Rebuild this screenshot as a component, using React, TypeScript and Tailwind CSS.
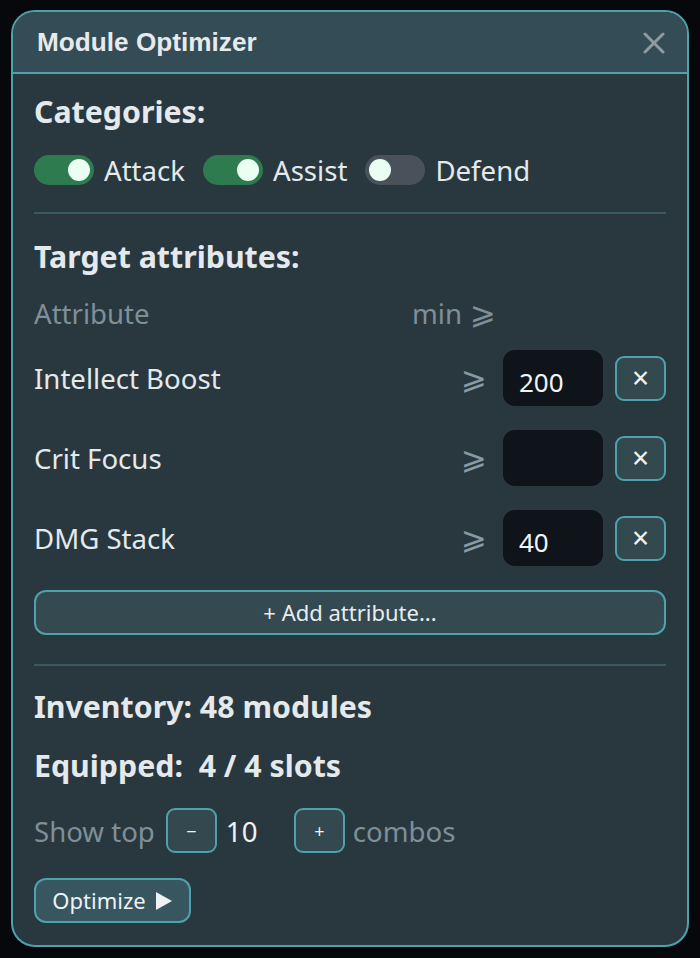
import React from "react";

type Attr = { name: string; value: string };

const attrs: Attr[] = [
	{ name: "Intellect Boost", value: "200" },
	{ name: "Crit Focus", value: "" },
	{ name: "DMG Stack", value: "40" },
];

const Toggle = ({ on, label }: { on: boolean; label: string }) => (
	<div className="flex items-center gap-[10px]">
		<div
			className={
				on
					? "flex h-[30px] w-[60px] items-center justify-end rounded-full bg-[#2e7b4f] px-[4px]"
					: "flex h-[30px] w-[60px] items-center justify-start rounded-full bg-[#49525b] px-[4px]"
			}
		>
			<div className="h-[22px] w-[22px] rounded-full bg-[#eafff2]" />
		</div>
		<span className="leading-[34px]">{label}</span>
	</div>
);

const SmallButton = ({ children }: { children: React.ReactNode }) => (
	<button className="flex h-[45px] w-[51px] items-center justify-center rounded-[9px] border-2 border-[#4ca3ad] bg-[#344850] leading-none text-[#eef2f4]">
		{children}
	</button>
);

export default function App() {
	return (
		<div className="min-h-[958px] w-full bg-[#07080b] px-[11px] pt-[10px] font-['Noto_Sans',sans-serif]">
			<div className="h-[937px] w-[678px] overflow-hidden rounded-[24px] border-2 border-[#4ca3ad] bg-[#29383f]">
				{/* header */}
				<div className="flex h-[62px] items-center justify-between border-b-2 border-[#4ca3ad] bg-[#334c55] pl-[24px] pr-[22px]">
					<h1 className="pt-[2px] font-['Liberation_Sans',Arial,sans-serif] text-[26.2px] font-bold text-[#e6eaec]">
						Module Optimizer
					</h1>
					<svg width="22" height="22" viewBox="0 0 22 22" className="mt-[1px]">
						<path d="M2 2 L20 20 M20 2 L2 20" stroke="#8f9b9f" strokeWidth="3" strokeLinecap="round" />
					</svg>
				</div>

				{/* body */}
				<div className="flex flex-col px-[21px] pt-[21px] text-[27.6px] text-[#e4e9ec]">
					<h2 className="text-[30.3px] font-bold leading-[34px]">Categories:</h2>

					<div className="mt-[26px] flex h-[30px] items-center gap-[18px]">
						<Toggle on label="Attack" />
						<Toggle on label="Assist" />
						<Toggle on={false} label="Defend" />
					</div>

					<div className="mt-[27px] h-[2px] bg-[#395861]" />

					<h2 className="mt-[26px] text-[30.3px] font-bold leading-[34px]">Target attributes:</h2>

					<div className="mt-[22px] flex items-center leading-[34px] text-[#7e8f98]">
						<span className="flex-1">Attribute</span>
						<span className="flex w-[254px] items-center gap-[8px]">
							min <span className="font-['DejaVu_Sans',sans-serif] text-[31px] leading-none">⩾</span>
						</span>
					</div>

					<div className="mt-[20px] flex flex-col gap-[24px]">
						{attrs.map((a) => (
							<div key={a.name} className="flex h-[56px] items-center">
								<span className="flex-1 leading-[34px]">{a.name}</span>
								<span className="font-['DejaVu_Sans',sans-serif] text-[31px] leading-none text-[#8a9aa3]">⩾</span>
								<div className="ml-[16px] flex h-[56px] w-[100px] items-end rounded-[12px] bg-[#0e141a] pb-[9px] pl-[16px] text-[26px] leading-[30px] text-[#f1f4f6]">
									{a.value}
								</div>
								<div className="ml-[12px]">
									<SmallButton>
										<span className="text-[30px]">×</span>
									</SmallButton>
								</div>
							</div>
						))}
					</div>

					<button className="mt-[24px] flex h-[45px] items-center justify-center rounded-[12px] border-2 border-[#4ca3ad] bg-[#354951] text-[22px] text-[#e8edef]">
						+ Add attribute...
					</button>

					<div className="mt-[29px] h-[2px] bg-[#395861]" />

					<p className="mt-[24px] text-[30.3px] font-bold leading-[34px]">Inventory: 48 modules</p>
					<p className="mt-[25px] whitespace-pre text-[30.3px] font-bold leading-[34px]">Equipped:  4 / 4 slots</p>

					<div className="mt-[25px] flex h-[45px] items-center">
						<span className="leading-[34px] text-[#7e8f98]">Show top</span>
						<div className="ml-[11px]">
							<SmallButton>
								<span className="text-[18px]">−</span>
							</SmallButton>
						</div>
						<span className="ml-[9px] w-[68px] leading-[34px] text-[#eef2f4]">10</span>
						<SmallButton>
							<span className="text-[18px]">+</span>
						</SmallButton>
						<span className="ml-[8px] leading-[34px] text-[#7e8f98]">combos</span>
					</div>

					<div className="mt-[25px] flex">
						<button className="flex h-[45px] w-[157px] items-center justify-center gap-[9px] rounded-[12px] border-2 border-[#4ca3ad] bg-[#38565f] text-[22px] text-[#eef2f4]">
							Optimize
							<svg width="18" height="20" viewBox="0 0 18 20">
								<path d="M1 1 L17 10 L1 19 Z" fill="#eef2f4" />
							</svg>
						</button>
					</div>
				</div>
			</div>
		</div>
	);
}
